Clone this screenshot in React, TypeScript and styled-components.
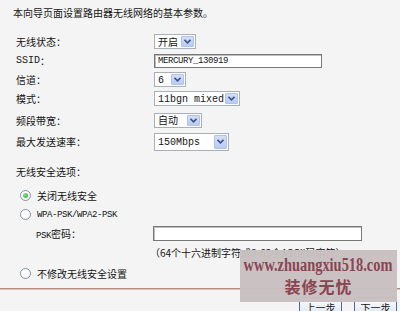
import React from "react";
import styled, { createGlobalStyle } from "styled-components";

const Global = createGlobalStyle`
  html, body { margin: 0; padding: 0; background: #f4f4f4; }
  body {
    font-family: "Noto Sans CJK SC", "Noto Sans", sans-serif;
    font-size: 10px;
    color: #141414;
  }
`;

const Page = styled.div`
  position: relative;
  width: 400px;
  height: 311px;
  overflow: hidden;
  background: #f4f4f4;
`;

const Intro = styled.div`
  padding: 7px 0 0 13px;
  line-height: 12px;
  height: 12px;
`;

const Form = styled.div`
  display: grid;
  grid-template-columns: 138px auto;
  margin-top: 13px;
  padding-left: 16px;
`;

const Label = styled.div<{ $h: number }>`
  height: ${(p) => p.$h}px;
  display: flex;
  align-items: center;
`;

const Cell = styled.div<{ $h: number }>`
  height: ${(p) => p.$h}px;
  display: flex;
  align-items: center;
`;

const Mono = styled.span<{ $size?: number; $ls?: number }>`
  font-family: "Liberation Mono", "DejaVu Sans Mono", monospace;
  font-size: ${(p) => p.$size ?? 10}px;
  letter-spacing: ${(p) => p.$ls ?? 0}px;
`;

const SelectBox = styled.div<{ $w: number; $h?: number }>`
  box-sizing: border-box;
  width: ${(p) => p.$w}px;
  height: ${(p) => p.$h ?? 15}px;
  display: flex;
  align-items: center;
  justify-content: space-between;
  background: #ffffff;
  border: 1px solid #a9b0ba;
  padding: 0 1px 0 3px;
`;

const SelectText = styled.span`
  line-height: 12px;
  white-space: nowrap;
`;

const Arrow = styled.span<{ $h?: number }>`
  box-sizing: border-box;
  width: 13px;
  height: ${(p) => (p.$h ?? 15) - 4}px;
  display: flex;
  align-items: center;
  justify-content: center;
  background: linear-gradient(#d2defa, #b9cbf3);
  border: 1px solid #b3c3e8;
  border-radius: 1px;
`;

const TextInput = styled.div<{ $w: number; $h: number }>`
  box-sizing: border-box;
  width: ${(p) => p.$w}px;
  height: ${(p) => p.$h}px;
  background: #ffffff;
  border: 1px solid #777;
  box-shadow: inset 1px 1px 0 #bdbdbd;
  display: flex;
  align-items: center;
  padding-left: 3px;
`;

const SectionTitle = styled.div`
  padding-left: 16px;
  margin-top: 14px;
  line-height: 14px;
  height: 14px;
`;

const Options = styled.div`
  margin-top: 7px;
  display: flex;
  flex-direction: column;
`;

const Option = styled.div<{ $mt?: number }>`
  height: 19px;
  margin-top: ${(p) => p.$mt ?? 0}px;
  display: flex;
  align-items: center;
  padding-left: 20px;
  gap: 6px;
`;

const Radio = styled.span<{ $checked?: boolean }>`
  box-sizing: border-box;
  width: 11px;
  height: 11px;
  border-radius: 50%;
  border: 1px solid #8594a8;
  background: radial-gradient(circle at 40% 40%, #ffffff 40%, #e4e8ee 100%);
  display: flex;
  align-items: center;
  justify-content: center;
  &::after {
    content: "";
    display: ${(p) => (p.$checked ? "block" : "none")};
    width: 5px;
    height: 5px;
    border-radius: 50%;
    background: radial-gradient(circle at 35% 35%, #8be08b, #2e9e2e);
  }
`;

const PskRow = styled.div`
  display: grid;
  grid-template-columns: 117px auto;
  padding-left: 36px;
  height: 19px;
  align-items: center;
`;

const Hint = styled.div`
  height: 19px;
  display: flex;
  align-items: center;
  padding-left: 150px;
  white-space: nowrap;
`;

const Divider = styled.div`
  margin-top: 5px;
  border-top: 1px solid #b98a7f;
  border-bottom: 1px solid #dcc3bb;
`;

const Footer = styled.div`
  margin-top: 7px;
  display: flex;
  justify-content: flex-end;
  gap: 12px;
  padding-right: 3px;
`;

const Button = styled.div`
  box-sizing: border-box;
  width: 43px;
  height: 20px;
  border: 1px solid #4d6a93;
  border-radius: 2px;
  background: linear-gradient(#fbfcfe, #dde5f0);
  display: flex;
  align-items: center;
  justify-content: center;
`;

const Watermark = styled.div`
  position: absolute;
  left: 240px;
  top: 250px;
  width: 157px;
  height: 52px;
  background: rgba(200, 192, 192, 0.97);
  display: flex;
  flex-direction: column;
  align-items: center;
  color: #8a4452;
`;

const WmUrl = styled.div`
  font-family: "Liberation Serif", "Times New Roman", serif;
  font-weight: bold;
  font-size: 18px;
  line-height: 18px;
  margin-top: 6px;
  white-space: nowrap;
  transform: scaleX(0.8);
`;

const WmName = styled.div`
  font-family: "Noto Sans CJK SC", sans-serif;
  font-weight: bold;
  font-size: 16px;
  line-height: 18px;
  letter-spacing: 1px;
  margin-top: 3px;
`;

const Chevron = () => (
  <svg width="7" height="5" viewBox="0 0 7 5">
    <path d="M0.5 0.8 L3.5 3.8 L6.5 0.8" fill="none" stroke="#3c5386" strokeWidth="1.6" />
  </svg>
);

const Select = ({ w, h, children }: { w: number; h?: number; children: React.ReactNode }) => (
  <SelectBox $w={w} $h={h}>
    <SelectText>{children}</SelectText>
    <Arrow $h={h}>
      <Chevron />
    </Arrow>
  </SelectBox>
);

const rows: { label: React.ReactNode; h: number; control: React.ReactNode }[] = [
  { label: "无线状态：", h: 19, control: <Select w={42}>开启</Select> },
  {
    label: <><Mono>SSID</Mono>：</>,
    h: 19,
    control: (
      <TextInput $w={168} $h={14}>
        <Mono $size={9} $ls={-0.4}>MERCURY_130919</Mono>
      </TextInput>
    ),
  },
  { label: "信道：", h: 19, control: <Select w={32}><Mono>6</Mono></Select> },
  { label: "模式：", h: 19, control: <Select w={86}><Mono>11bgn mixed</Mono></Select> },
  { label: "频段带宽：", h: 24, control: <Select w={48}>自动</Select> },
  { label: "最大发送速率：", h: 19, control: <Select w={75} h={18}><Mono>150Mbps</Mono></Select> },
];

export default function App() {
  return (
    <Page>
      <Global />
      <Intro>本向导页面设置路由器无线网络的基本参数。</Intro>
      <Form>
        {rows.map((r, i) => (
          <React.Fragment key={i}>
            <Label $h={r.h}>{r.label}</Label>
            <Cell $h={r.h}>{r.control}</Cell>
          </React.Fragment>
        ))}
      </Form>
      <SectionTitle>无线安全选项：</SectionTitle>
      <Options>
        <Option>
          <Radio $checked />
          <span>关闭无线安全</span>
        </Option>
        <Option>
          <Radio />
          <Mono $size={9} $ls={-0.4}>WPA-PSK/WPA2-PSK</Mono>
        </Option>
        <PskRow>
          <span><Mono $size={9} $ls={-0.4}>PSK</Mono>密码：</span>
          <TextInput $w={209} $h={15} />
        </PskRow>
        <Hint>（64个十六进制字符或8-63个ASCII码字符）</Hint>
        <Option $mt={2}>
          <Radio />
          <span>不修改无线安全设置</span>
        </Option>
      </Options>
      <Divider />
      <Footer>
        <Button>上一步</Button>
        <Button>下一步</Button>
      </Footer>
      <Watermark>
        <WmUrl>www.zhuangxiu518.com</WmUrl>
        <WmName>装修无忧</WmName>
      </Watermark>
    </Page>
  );
}
